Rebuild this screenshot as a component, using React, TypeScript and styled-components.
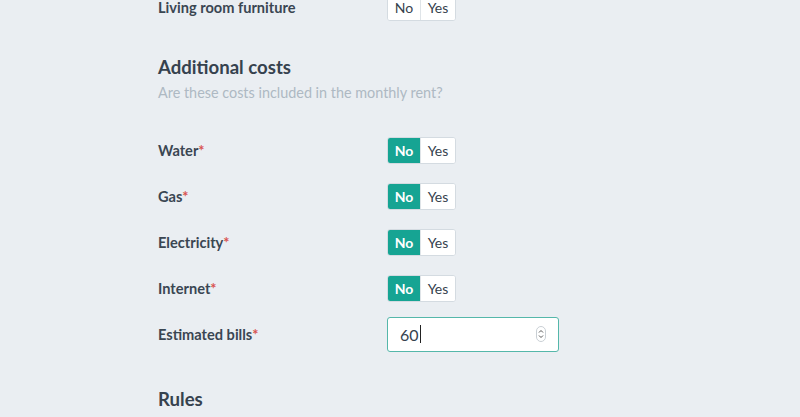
import React from "react";
import styled, { createGlobalStyle } from "styled-components";

const Global = createGlobalStyle`
  html, body { margin: 0; padding: 0; background: #eaeef2; overflow: hidden; }
  body { font-family: Lato, "Noto Sans", sans-serif; color: #36424e; }
`;

const Page = styled.div`
  width: 800px;
  height: 417px;
  overflow: hidden;
  background: #eaeef2;
`;

const Column = styled.div`
  margin-top: -16px;
  padding-left: 158px;
  display: flex;
  flex-direction: column;
`;

const Row = styled.div`
  display: grid;
  grid-template-columns: 229px auto;
  align-items: center;
  height: 46px;
`;

const Label = styled.div`
  font-size: 14.6px;
  font-weight: 700;
  color: #3a4652;
  white-space: nowrap;
`;

const Req = styled.span`
  color: #d9534f;
`;

const Section = styled.div<{ $top: number; $bottom: number }>`
  margin-top: ${(p) => p.$top}px;
  margin-bottom: ${(p) => p.$bottom}px;
`;

const Heading = styled.h2`
  margin: 0;
  font-size: 18.6px;
  line-height: 24px;
  font-weight: 700;
  color: #36424e;
`;

const Sub = styled.p`
  margin: 4px 0 0;
  font-size: 14.4px;
  line-height: 20px;
  color: #aeb9c3;
`;

const Toggle = styled.div`
  display: inline-flex;
  height: 27px;
  border: 1px solid #d4dbe1;
  border-radius: 3px;
  overflow: hidden;
  background: #fff;
  box-sizing: border-box;
  width: max-content;
`;

const Opt = styled.div<{ $active?: boolean; $w: number }>`
  width: ${(p) => p.$w}px;
  display: flex;
  align-items: center;
  justify-content: center;
  font-size: 14px;
  font-weight: ${(p) => (p.$active ? 700 : 400)};
  color: ${(p) => (p.$active ? "#fff" : "#36424e")};
  background: ${(p) => (p.$active ? "#16a493" : "#fff")};
  & + & {
    border-left: 1px solid #dfe4e8;
  }
`;

const Field = styled.div`
  width: 172px;
  height: 35px;
  box-sizing: border-box;
  border: 1px solid #55b7aa;
  border-radius: 3px;
  background: #fff;
  display: flex;
  align-items: center;
  padding: 0 12px 0 12px;
  font-size: 16px;
  color: #36424e;
`;

const Caret = styled.span`
  display: inline-block;
  width: 1px;
  height: 18px;
  background: #222;
  margin-left: 1px;
`;

const Spinner = styled.svg`
  margin-left: auto;
`;

function YesNo({ value }: { value?: "no" | "yes" }) {
  return (
    <Toggle>
      <Opt $w={32} $active={value === "no"}>No</Opt>
      <Opt $w={34} $active={value === "yes"}>Yes</Opt>
    </Toggle>
  );
}

export default function App() {
  return (
    <Page>
      <Global />
      <Column>
        <Row>
          <Label>Living room furniture</Label>
          <YesNo />
        </Row>
        <Section $top={25} $bottom={24}>
          <Heading>Additional costs</Heading>
          <Sub>Are these costs included in the monthly rent?</Sub>
        </Section>
        {["Water", "Gas", "Electricity", "Internet"].map((l) => (
          <Row key={l}>
            <Label>
              {l}
              <Req>*</Req>
            </Label>
            <YesNo value="no" />
          </Row>
        ))}
        <Row>
          <Label>
            Estimated bills<Req>*</Req>
          </Label>
          <Field>
            <span>60</span>
            <Caret />
            <Spinner width="10" height="16" viewBox="0 0 10 16">
              <rect x="0.5" y="0.5" width="9" height="15" rx="4.5" fill="#fff" stroke="#c9cfd4" />
              <path d="M3 6.5 L5 4.5 L7 6.5" fill="none" stroke="#555" strokeWidth="1" />
              <path d="M3 9.5 L5 11.5 L7 9.5" fill="none" stroke="#555" strokeWidth="1" />
            </Spinner>
          </Field>
        </Row>
        <Section $top={30} $bottom={0}>
          <Heading>Rules</Heading>
        </Section>
      </Column>
    </Page>
  );
}
